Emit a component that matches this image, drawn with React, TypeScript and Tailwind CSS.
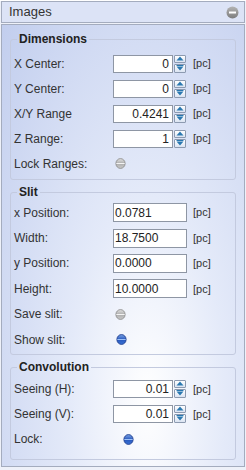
import React from "react";

const font = { fontFamily: '"Liberation Sans", Arial, sans-serif' };

function Spinner({ value }: { value: string }) {
  return (
    <div className="flex items-center">
      <div className="flex h-[18px] w-[60px] items-center justify-end border border-[#8e96a4] bg-white pr-[3px] text-[12px] text-[#222]">
        {value}
      </div>
      <div className="ml-[1px] flex h-[18px] w-[12px] flex-col gap-[1px]">
        <div className="flex h-[8px] items-center justify-center rounded-[1px] border border-[#8c9ab0] bg-gradient-to-b from-white to-[#dbe4f2]">
          <svg width="8" height="5" viewBox="0 0 8 5">
            <path d="M4 0.5 L7.5 4.5 L0.5 4.5 Z" fill="#2a78b0" />
          </svg>
        </div>
        <div className="flex h-[9px] items-center justify-center rounded-[1px] border border-[#8c9ab0] bg-gradient-to-b from-white to-[#dbe4f2]">
          <svg width="8" height="6" viewBox="0 0 8 6">
            <rect x="0.5" y="0" width="7" height="1" fill="#2a78b0" />
            <path d="M0.5 1.5 L7.5 1.5 L4 5.5 Z" fill="#2a78b0" />
          </svg>
        </div>
      </div>
      <span className="ml-[7px] text-[11px] text-[#333]">[pc]</span>
    </div>
  );
}

function TextField({ value }: { value: string }) {
  return (
    <div className="flex items-center">
      <div className="flex h-[19px] w-[74px] items-center border border-[#8e96a4] bg-white pl-[1px] text-[12px] text-[#222]">
        {value}
      </div>
      <span className="ml-[6px] text-[11px] text-[#333]">[pc]</span>
    </div>
  );
}

function Dot({ on }: { on: boolean }) {
  const id = on ? "dotOn" : "dotOff";
  return (
    <svg width="11" height="11" viewBox="0 0 11 11">
      <defs>
        <linearGradient id={id} x1="0" y1="0" x2="0" y2="1">
          <stop offset="0" stopColor={on ? "#7aa4e6" : "#e2e2e2"} />
          <stop offset="0.5" stopColor={on ? "#2858bd" : "#adadad"} />
          <stop offset="1" stopColor={on ? "#3a72d6" : "#cbcbcb"} />
        </linearGradient>
      </defs>
      <ellipse cx="5.5" cy="5.5" rx="4.6" ry="4.9" fill={`url(#${id})`} stroke={on ? "#213f90" : "#8e8e8e"} strokeWidth="0.9" />
      <rect x="1.3" y="5" width="8.4" height="1" fill={on ? "#9dc0f5" : "#f3f3f3"} />
    </svg>
  );
}

function Row({ label, h, children }: { label: string; h?: string; children: React.ReactNode }) {
  return (
    <div className={"flex items-center " + (h ?? "h-[25px]")}>
      <div className="w-[99px] text-[12px] text-[#333]">{label}</div>
      {children}
    </div>
  );
}

function Group({ title, className, children }: { title: string; className?: string; children: React.ReactNode }) {
  return (
    <fieldset className={"rounded-[3px] border border-[#c3cadf] pl-[3px] " + (className ?? "")}>
      <legend className="ml-[3px] px-[2px] text-[12px] font-bold leading-[15px] text-[#222]">{title}</legend>
      {children}
    </fieldset>
  );
}

export default function App() {
  return (
    <div className="h-[470px] w-[246px] bg-[#eef1f9]" style={font}>
      <div className="mx-[1px] mt-[1px] flex h-[22px] items-center justify-between border border-[#a4acbe] bg-[#dce3f6] pl-[7px] pr-[5px]">
        <span className="text-[13px] text-[#333]">Images</span>
        <svg width="13" height="13" viewBox="0 0 13 13">
          <defs>
            <linearGradient id="minus" x1="0" y1="0" x2="0" y2="1">
              <stop offset="0" stopColor="#b4b4b4" />
              <stop offset="1" stopColor="#7c7c7c" />
            </linearGradient>
          </defs>
          <circle cx="6.5" cy="6.5" r="6" fill="url(#minus)" />
          <rect x="3" y="5.5" width="7" height="2" fill="#fff" />
        </svg>
      </div>
      <div className="mx-[1px] mt-[1px] h-[443px] border border-[#a4acbe] bg-[radial-gradient(ellipse_at_60%_85%,#ffffff_0%,#e4eaf9_38%,#c2ceee_100%)] px-[8px] pt-[7px]">
        <Group title="Dimensions" className="pb-[3px]">
          <div className="pt-[4px]">
            <Row label="X Center:"><Spinner value="0" /></Row>
            <Row label="Y Center:"><Spinner value="0" /></Row>
            <Row label="X/Y Range"><Spinner value="0.4241" /></Row>
            <Row label="Z Range:"><Spinner value="1" /></Row>
            <Row label="Lock Ranges:"><div className="ml-[2px] flex"><Dot on={false} /></div></Row>
          </div>
        </Group>
        <Group title="Slit" className="mt-[5px] pb-[2px]">
          <div>
            <Row h="h-[25.4px]" label="x Position:"><TextField value="0.0781" /></Row>
            <Row h="h-[25.4px]" label="Width:"><TextField value="18.7500" /></Row>
            <Row h="h-[25.4px]" label="y Position:"><TextField value="0.0000" /></Row>
            <Row h="h-[25.4px]" label="Height:"><TextField value="10.0000" /></Row>
            <Row h="h-[25.4px]" label="Save slit:"><div className="ml-[2px] flex"><Dot on={false} /></div></Row>
            <Row h="h-[25.4px]" label="Show slit:"><div className="ml-[3px] flex"><Dot on={true} /></div></Row>
          </div>
        </Group>
        <Group title="Convolution" className="mt-[5px] pb-[7px]">
          <div className="pt-[1px]">
            <Row label="Seeing (H):"><Spinner value="0.01" /></Row>
            <Row label="Seeing (V):"><Spinner value="0.01" /></Row>
            <Row h="h-[26px]" label="Lock:"><div className="ml-[10px] flex"><Dot on={true} /></div></Row>
          </div>
        </Group>
      </div>
    </div>
  );
}
